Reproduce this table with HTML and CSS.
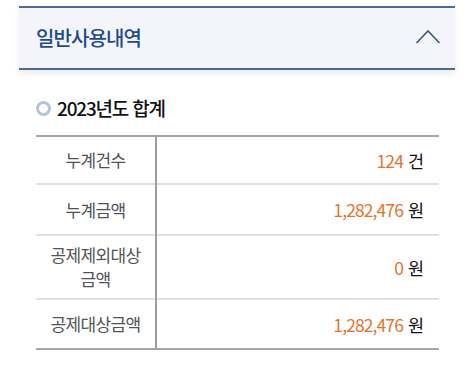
FILE: index.html
```html
<!DOCTYPE html>
<html lang="ko">
<head>
<meta charset="utf-8">
<link rel="stylesheet" href="styles.css">
</head>
<body>
<div class="page">
  <div class="acc-head">
    <span class="acc-title">일반사용내역</span>
    <svg class="chev" width="26" height="16" viewBox="0 0 26 16"><polyline points="1.5,14 13,2 24.5,14" fill="none" stroke="#3f5878" stroke-width="1.6"/></svg>
  </div>
  <div class="section">
    <div class="sec-title"><span class="dot"></span><span>2023년도 합계</span></div>
    <table class="tbl">
      <tr class="r1"><th>누계건수</th><td><span class="num">124</span> 건</td></tr>
      <tr class="r2"><th>누계금액</th><td><span class="num">1,282,476</span> 원</td></tr>
      <tr class="r3"><th>공제제외대상<br>금액</th><td><span class="num">0</span> 원</td></tr>
      <tr class="r4"><th>공제대상금액</th><td><span class="num">1,282,476</span> 원</td></tr>
    </table>
  </div>
</div>
</body>
</html>
```
FILE: styles.css
```css
html, body { margin: 0; padding: 0; background: #fff; }
body { font-family: "Noto Sans CJK KR", "Noto Sans", sans-serif; }
.page { padding: 6px 19px 0 19px; width: 436px; }
.acc-head {
  height: 60px;
  border-top: 2px solid #4a6a99;
  border-bottom: 2px solid #4a6a99;
  background: #f3f5fa;
  box-shadow: 0 4px 6px rgba(0,0,0,0.07);
  display: flex; align-items: center; justify-content: space-between;
  padding: 0 14px 0 17px;
}
.acc-title { font-size: 20px; font-weight: 500; color: #1f4a8c; letter-spacing: -0.9px; margin-top: -2px; }
.chev { margin-top: -3px; }
.section { padding: 0 16px 0 17px; }
.sec-title { display: flex; align-items: center; gap: 6px; margin-top: 24px; height: 26px;
  font-size: 19px; font-weight: 500; color: #111; letter-spacing: -1.2px; }
.dot { width: 9px; height: 9px; border: 3px solid #b3c2dd; border-radius: 50%; margin-top: 2px; }
.tbl { width: 100%; border-collapse: collapse; margin-top: 15px; border-top: 2px solid #a3a6ab; border-bottom: 2px solid #a3a6ab; }
.tbl th { width: 119px; font-weight: 400; font-size: 17px; color: #4f5358; text-align: center; border-right: 2px solid #9a9ea4; line-height: 24px; padding: 0; letter-spacing: -0.6px; }
.tbl td { text-align: right; font-size: 17.5px; color: #111; padding: 0 15px 0 0; }
.tbl tr + tr th, .tbl tr + tr td { border-top: 2px solid #dfe1e4; }
.num { color: #e2742f; letter-spacing: -0.9px; }
.r1 { height: 48px; }
.r2 { height: 51px; }
.r3 { height: 64px; }
.r4 { height: 50px; }
```
